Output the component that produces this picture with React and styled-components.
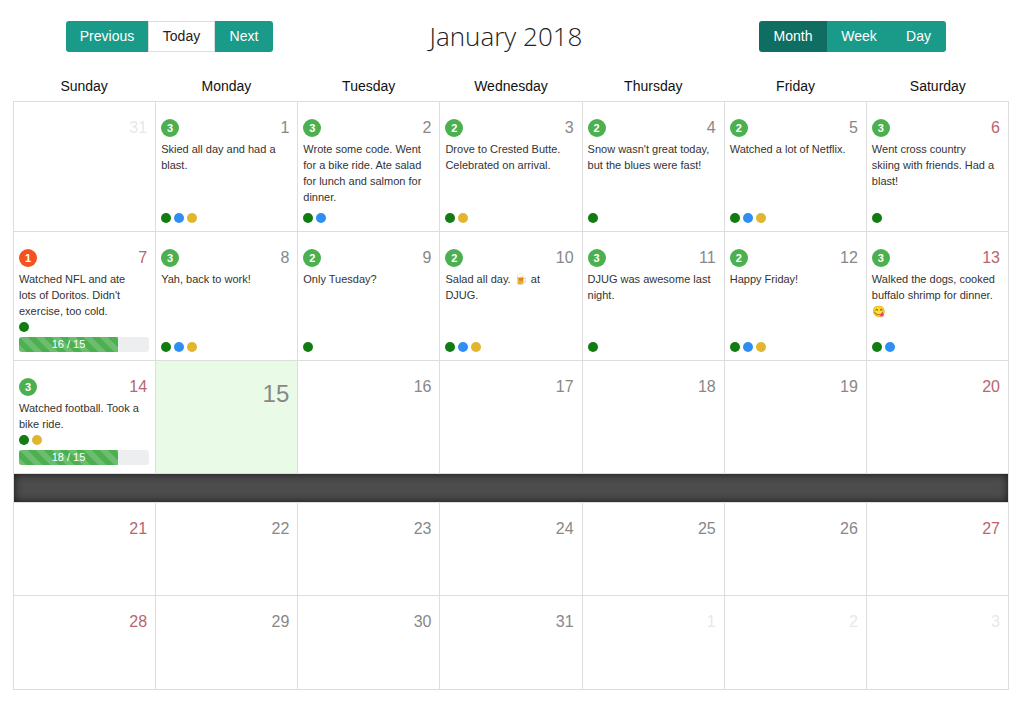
import React from "react";
import styled, { createGlobalStyle, css } from "styled-components";

const G = createGlobalStyle`
  body { margin: 0; background: #fff; font-family: "Liberation Sans", Arial, sans-serif; }
`;
const TEAL = "#1a9a88";
const Page = styled.div` width: 1023px; padding: 18px 0 0; `;
const Top = styled.div`
  display: grid; grid-template-columns: 1fr auto 1fr; align-items: center;
  padding: 0 77px 0 66px; height: 31px;
`;
const Group = styled.div` display: flex; justify-self: ${p => p.$end ? "end" : "start"}; border-radius: 3px; overflow: hidden; `;
const Btn = styled.div`
  height: 31px; box-sizing: border-box; display: flex; align-items: center; justify-content: center;
  width: ${p => p.$w}px; font-size: 14px;
  background: ${p => p.$white ? "#fff" : p.$active ? "#0f6e61" : TEAL};
  color: ${p => p.$white ? "#222" : "#fff"};
  ${p => p.$white && css`border: 1px solid #ddd;`}
`;
const Title = styled.div` font-size: 26px; font-weight: 300; color: #222; font-family: "Open Sans", "Liberation Sans", sans-serif; `;
const Cal = styled.div` margin: 0 14px 0 13px; `;
const Heads = styled.div` display: grid; grid-template-columns: repeat(7, 1fr); margin-top: 28px; height: 24px; `;
const Head = styled.div` text-align: center; font-size: 14px; color: #111; line-height: 18px; `;
const Grid = styled.div`
  display: grid; grid-template-columns: repeat(7, 1fr);
  border-left: 1px solid #ddd; border-top: 1px solid #ddd;
`;
const Row = styled.div`
  display: grid; grid-template-columns: repeat(7, 1fr); grid-column: 1 / -1; height: ${p => p.$h}px;
`;
const Cell = styled.div`
  border-right: 1px solid #ddd; border-bottom: 1px solid #ddd; box-sizing: border-box;
  padding: 16px 6px 8px 5px; display: flex; flex-direction: column; min-width: 0;
  background: ${p => p.$today ? "#e9fbe6" : "#fff"};
`;
const CellTop = styled.div` display: flex; justify-content: space-between; align-items: center; height: 20px; `;
const Badge = styled.span`
  width: 18px; height: 18px; border-radius: 50%; background: ${p => p.$red ? "#f4521f" : "#4caf50"};
  color: #fff; font-size: 11px; font-weight: bold; display: flex; align-items: center; justify-content: center;
`;
const Num = styled.span`
  margin-left: auto; font-size: ${p => p.$big ? 24 : 16}px; padding-right: 2px;
  margin-top: ${p => p.$big ? 14 : 0}px;
  color: ${p => p.$out ? "#e8e8e8" : p.$wk ? "#b86570" : "#888"};
`;
const Text = styled.div` font-size: 11px; line-height: 16px; color: #333; margin-top: 3px; padding-right: 6px; `;
const Dots = styled.div` display: flex; gap: 3px; margin-top: auto; `;
const Dot = styled.span` width: 10px; height: 10px; border-radius: 50%; background: ${p => p.$c}; `;
const Bar = styled.div` height: 15px; background: #eceef0; border-radius: 3px; margin-top: 5px; overflow: hidden; `;
const Fill = styled.div`
  height: 100%; color: #fff; font-size: 11px; text-align: center; line-height: 15px;
  background-color: #4caf50;
  background-image: linear-gradient(45deg, rgba(255,255,255,.18) 25%, transparent 25%, transparent 50%, rgba(255,255,255,.18) 50%, rgba(255,255,255,.18) 75%, transparent 75%);
  background-size: 16px 16px;
`;
const Dark = styled.div`
  grid-column: 1 / -1; height: 28px; background: #4c4c4c; border-right: 1px solid #ddd; border-bottom: 1px solid #ddd;
  box-shadow: inset 0 0 8px rgba(0,0,0,.7);
`;

const C = { g: "#117c11", b: "#2e8ff0", y: "#e2b52f" };
const rows = [
  { h: 130, cells: [
    { n: 31, out: true },
    { n: 1, b: 3, t: "Skied all day and had a blast.", d: "gby" },
    { n: 2, b: 3, t: "Wrote some code. Went for a bike ride. Ate salad for lunch and salmon for dinner.", d: "gb" },
    { n: 3, b: 2, t: "Drove to Crested Butte. Celebrated on arrival.", d: "gy" },
    { n: 4, b: 2, t: "Snow wasn't great today, but the blues were fast!", d: "g" },
    { n: 5, b: 2, t: "Watched a lot of Netflix.", d: "gby" },
    { n: 6, b: 3, t: "Went cross country skiing with friends. Had a blast!", d: "g" },
  ]},
  { h: 129, cells: [
    { n: 7, b: 1, red: true, t: "Watched NFL and ate lots of Doritos. Didn't exercise, too cold.", d: "g", bar: "16 / 15" },
    { n: 8, b: 3, t: "Yah, back to work!", d: "gby" },
    { n: 9, b: 2, t: "Only Tuesday?", d: "g" },
    { n: 10, b: 2, t: "Salad all day. 🍺 at DJUG.", d: "gby" },
    { n: 11, b: 3, t: "DJUG was awesome last night.", d: "g" },
    { n: 12, b: 2, t: "Happy Friday!", d: "gby" },
    { n: 13, b: 3, t: "Walked the dogs, cooked buffalo shrimp for dinner. 😋", d: "gb" },
  ]},
  { h: 113, cells: [
    { n: 14, b: 3, t: "Watched football. Took a bike ride.", d: "gy", bar: "18 / 15" },
    { n: 15, today: true }, { n: 16 }, { n: 17 }, { n: 18 }, { n: 19 }, { n: 20 },
  ]},
  "dark",
  { h: 93, cells: [21,22,23,24,25,26,27].map(n => ({ n })) },
  { h: 94, cells: [{ n: 28 }, { n: 29 }, { n: 30 }, { n: 31 }, { n: 1, out: true }, { n: 2, out: true }, { n: 3, out: true }] },
];

export default function App() {
  return (
    <Page>
      <G />
      <Top>
        <Group>
          <Btn $w={82}>Previous</Btn><Btn $w={67} $white>Today</Btn><Btn $w={58}>Next</Btn>
        </Group>
        <Title>January 2018</Title>
        <Group $end>
          <Btn $w={68} $active>Month</Btn><Btn $w={64}>Week</Btn><Btn $w={55}>Day</Btn>
        </Group>
      </Top>
      <Cal>
        <Heads>
          {["Sunday","Monday","Tuesday","Wednesday","Thursday","Friday","Saturday"].map(d => <Head key={d}>{d}</Head>)}
        </Heads>
        <Grid>
          {rows.map((r, i) => r === "dark" ? <Dark key={i} /> : (
            <Row key={i} $h={r.h}>
              {r.cells.map((c, j) => (
                <Cell key={j} $today={c.today}>
                  <CellTop>
                    {c.b && <Badge $red={c.red}>{c.b}</Badge>}
                    <Num $out={c.out} $wk={!c.out && (j === 0 || j === 6)} $big={c.today}>{c.n}</Num>
                  </CellTop>
                  {c.t && <Text>{c.t}</Text>}
                  {c.d && <Dots>{c.d.split("").map((k, x) => <Dot key={x} $c={C[k]} />)}</Dots>}
                  {c.bar && <Bar><Fill style={{ width: "76%" }}>{c.bar}</Fill></Bar>}
                </Cell>
              ))}
            </Row>
          ))}
        </Grid>
      </Cal>
    </Page>
  );
}
